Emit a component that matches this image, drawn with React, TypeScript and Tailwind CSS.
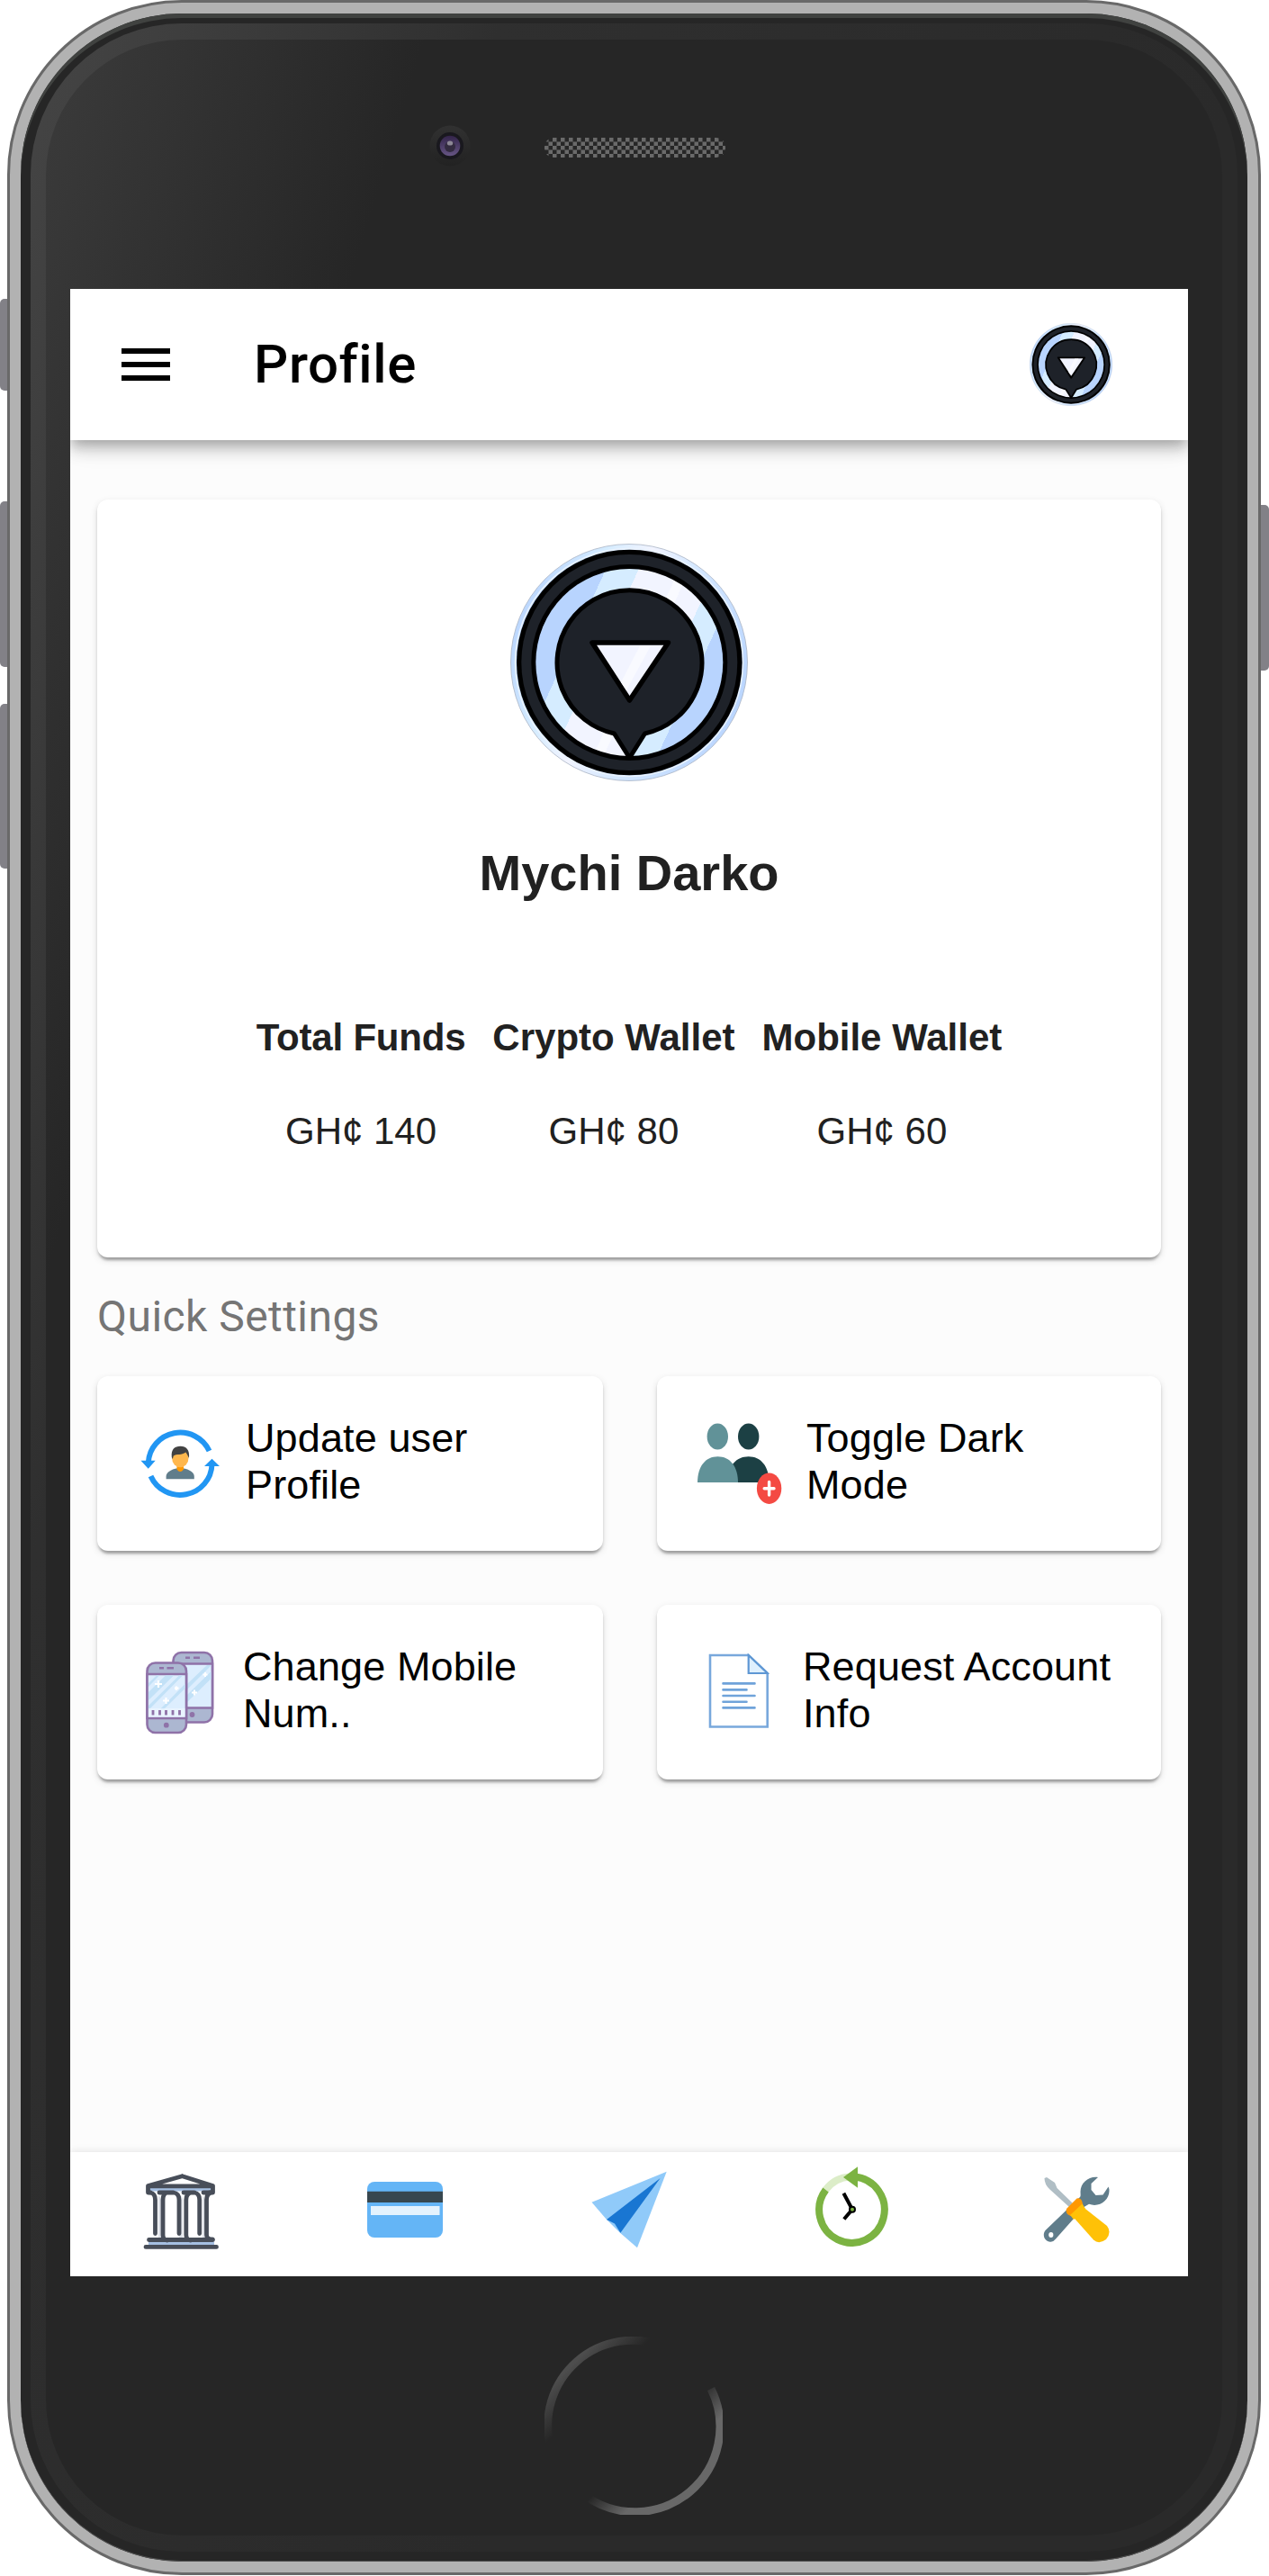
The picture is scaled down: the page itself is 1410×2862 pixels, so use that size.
import React from "react";

type IconProps = { className?: string };

function CoinLogo({ className }: IconProps) {
  return (
    <svg viewBox="0 0 264 264" className={className}>
      <defs>
        <linearGradient id="shine" gradientUnits="userSpaceOnUse" x1="0" y1="0" x2="240" y2="111">
          <stop offset="0.41" stopColor="#b8d4fe" />
          <stop offset="0.41" stopColor="#d5ecff" />
          <stop offset="0.535" stopColor="#d5ecff" />
          <stop offset="0.535" stopColor="#f2f4ff" />
          <stop offset="0.69" stopColor="#f2f4ff" />
          <stop offset="0.69" stopColor="#f9faff" />
          <stop offset="0.73" stopColor="#f9faff" />
          <stop offset="0.73" stopColor="#f2f4ff" />
          <stop offset="0.83" stopColor="#f2f4ff" />
          <stop offset="0.83" stopColor="#d5ecff" />
          <stop offset="0.935" stopColor="#d5ecff" />
          <stop offset="0.935" stopColor="#b8d4fe" />
        </linearGradient>
        <linearGradient id="rim" x1="0" y1="0.3" x2="1" y2="0.7">
          <stop offset="0" stopColor="#b8d4fe" />
          <stop offset="0.25" stopColor="#d5ecff" />
          <stop offset="0.42" stopColor="#f2f4ff" />
          <stop offset="0.6" stopColor="#d5e8ff" />
          <stop offset="1" stopColor="#b8d4fe" />
        </linearGradient>
      </defs>
      <circle cx="132" cy="132" r="131.500" fill="url(#rim)" stroke="#a9b4c4" strokeWidth="0.800" />
      <circle cx="132" cy="132" r="126.500" fill="none" stroke="#eaf3ff" strokeWidth="1.500" />
      <circle cx="132.300" cy="132" r="125.300" fill="#000" />
      <circle cx="132.300" cy="132" r="120" fill="#1e2229" />
      <circle cx="132.300" cy="132" r="109" fill="#000" />
      <circle cx="132.300" cy="132" r="104" fill="url(#shine)" />
      <path
        d="M115.500 211A80.500 80.500 0 1 1 149.500 211L132.500 238Z"
        fill="#1e2229"
        stroke="#000"
        strokeWidth="5"
        strokeLinejoin="round"
      />
      <path d="M91 110H175.500L132.500 174Z" fill="#f2f4ff" stroke="#000" strokeWidth="5.500" strokeLinejoin="round" />
      <path d="M144 113.500H156L129 163L123 154Z" fill="#f9faff" />
    </svg>
  );
}

function UpdateUserIcon({ className }: IconProps) {
  return (
    <svg viewBox="0 0 88 76" className={className}>
      <g fill="none" stroke="#2196f3" strokeWidth="6">
        <path d="M8.800 37A35.500 35 0 0 1 76.500 24" />
        <path d="M79.500 39A35.500 35 0 0 1 11.500 52" />
      </g>
      <path d="M.5 34.700H16.700L8.700 43.700ZM71 41H88L79.500 32.700Z" fill="#2196f3" />
      <path d="M28.600 55.300V52C28.600 47 37 43 44.200 43S59.800 47 59.800 52V55.300Z" fill="#607d8b" />
      <path d="M40.500 39H48V44.500Q44.200 49.500 40.500 44.500Z" fill="#ff9800" />
      <ellipse cx="44.300" cy="32" rx="9.200" ry="10.300" fill="#ffb74d" />
      <path d="M34.800 31C34 22 38 18.800 44.500 18.800C51 18.800 55 23 54 32L52.500 29L50.500 25.500C46 29 40 27 36.800 29.500L35.800 33Z" fill="#424242" />
    </svg>
  );
}

function UsersPlusIcon({ className }: IconProps) {
  return (
    <svg viewBox="0 0 94 90" className={className}>
      <ellipse cx="56.700" cy="15" rx="11.700" ry="14.500" fill="#1c4044" />
      <path d="M33 66C33 48 43 37.200 56.700 37.200S79.500 48 79.500 66Z" fill="#1c4044" />
      <ellipse cx="22.300" cy="15" rx="11.700" ry="14.500" fill="#619298" />
      <path d="M0 66C0 48 9 37.200 22.500 37.200S45 48 45 66Z" fill="#619298" />
      <ellipse cx="79.600" cy="72.700" rx="13.700" ry="17.200" fill="#f44a43" />
      <path d="M79.600 65.500V80M74.200 72.700H85" stroke="#fff" strokeWidth="3.400" strokeLinecap="round" />
    </svg>
  );
}

function PhonesIcon({ className }: IconProps) {
  return (
    <svg viewBox="0 0 76 93" className={className}>
      <g stroke="#8f72a8" strokeWidth="2.600">
        <rect x="30.500" y="2" width="43.500" height="77.500" rx="9" fill="#acb7d1" />
        <path d="M30.500 14.500H74V63.500H30.500Z" fill="#ddeefe" />
      </g>
      <path d="M46 49L72.500 23V31L46 57ZM46 37L68 16H73L46 43Z" fill="#c2e1f7" />
      <path d="M44 7.800H49M53 7.800H60" stroke="#8f72a8" strokeWidth="2.600" />
      <circle cx="51.500" cy="71" r="2.900" fill="#8f72a8" />
      <path d="M54 43.500V49.500M51 46.500H57M66 24V29M63.500 26.500H68.500" stroke="#fff" strokeWidth="2" />
      <g stroke="#8f72a8" strokeWidth="2.600">
        <rect x="1.500" y="13.500" width="43.500" height="77.500" rx="9" fill="#acb7d1" />
        <path d="M1.500 26H45V75H1.500Z" fill="#ddeefe" />
      </g>
      <path d="M3 46L22 27.500H31L3 55ZM3 61L37 27.500H41L3 66ZM16 65L43.500 37V42L20 65ZM3 36L12 27.500H15L3 40Z" fill="#c2e1f7" />
      <path d="M3 64H43.500V73.500H3Z" fill="#eef6ff" opacity="0.700" />
      <path d="M15 19.300H20M23.500 19.300H31" stroke="#8f72a8" strokeWidth="2.600" />
      <path d="M8 66V71.500M15.500 66V71.500M22.500 66V71.500M30 66V71.500M37.500 66V71.500" stroke="#8f72a8" strokeWidth="2.800" />
      <path d="M14 33V41M10 37H18M22.500 52V59M19 55.500H26M34 39.500V44M32 41.700H36.500" stroke="#fff" strokeWidth="2.200" />
      <circle cx="22.800" cy="82.700" r="2.900" fill="#8f72a8" />
    </svg>
  );
}

function DocumentIcon({ className }: IconProps) {
  return (
    <svg viewBox="0 0 70 84" className={className}>
      <path d="M4 2H46.700L67.700 22V81.500H4Z" fill="#fff" stroke="#78a8dc" strokeWidth="2.600" />
      <path d="M46.700 2V22H67.700Z" fill="#dff0fe" stroke="#5e97d4" strokeWidth="2.200" />
      <path
        d="M18.500 33.400H53.500M18.500 40.400H44.500M18.500 47H53.500M18.500 53.800H44.500M18.500 60.400H53.500"
        stroke="#6fa3da"
        strokeWidth="2.600"
        strokeLinecap="round"
      />
    </svg>
  );
}

function BankIcon({ className }: IconProps) {
  return (
    <svg viewBox="0 0 85 85" className={className}>
      <path d="M6.500 15.500H78.500V19.500H6.500ZM6 75.500H79V79.500H6Z" fill="#a5bfe2" />
      <path d="M39 25Q43 23 44 28V72H40ZM17 25Q20 25 20 30V72H17ZM66 25Q68 25 68.500 30V72H66Z" fill="#dfe2e8" />
      <g fill="none" stroke="#484e59" strokeWidth="4.800" strokeLinecap="round" strokeLinejoin="round">
        <path d="M43.500 2.800L5.500 13.500V21H8M43.500 2.800L77.500 13.500V21H74M5.500 13.800H77.500" />
        <path d="M8 21Q13.500 22 13.500 29V66.500" />
        <path d="M18 21H34Q40 22 40 29V66.500M31 21H27Q22 22 22 29V68Q22 74 27 74" />
        <path d="M45 21H57Q62.700 22 62.700 29V66.500M57 21H54Q47.800 22 47.800 29V68Q47.800 74 53 74" />
        <path d="M67 21H75Q70.500 23 70.500 29V68Q70.500 73 77 73" />
        <path d="M6.500 73.500H77.500M3 81.400H81.500" />
      </g>
    </svg>
  );
}

function CreditCardIcon({ className }: IconProps) {
  return (
    <svg viewBox="0 0 84 62" className={className}>
      <rect width="84" height="62" rx="8" fill="#64b5f6" />
      <path d="M0 10.700H84V23H0Z" fill="#37474f" />
      <path d="M4 27H80.500V37H4Z" fill="#e3f2fd" />
    </svg>
  );
}

function PaperPlaneIcon({ className }: IconProps) {
  return (
    <svg viewBox="0 0 86 86" className={className}>
      <path d="M1.500 34.700L84.700 .7L52 85.300L33 68.700L18 54Z" fill="#90caf9" />
      <path d="M18 54L77.600 8L33.400 68.700L27 58.500Z" fill="#1976d2" />
    </svg>
  );
}

function HistoryIcon({ className }: IconProps) {
  return (
    <svg viewBox="0 0 84 90" className={className}>
      <path d="M12 27.500A36.300 36.700 0 0 1 40 12.500" fill="none" stroke="#dcedc8" strokeWidth="8" />
      <path d="M44 12.500A36.300 36.700 0 1 1 12.500 27" fill="none" stroke="#7cb342" strokeWidth="8" />
      <path d="M32 13L48 1.300V24.700Z" fill="#7cb342" />
      <path d="M32.400 30.700L42 48.700L32.800 59.500" fill="none" stroke="#000" strokeWidth="4" />
      <circle cx="42" cy="48.700" r="4" fill="#000" />
      <circle cx="42" cy="48.700" r="2" fill="#7cb342" />
    </svg>
  );
}

function ToolsIcon({ className }: IconProps) {
  return (
    <svg viewBox="0 0 75 75" className={className}>
      <path
        d="M61 2C51 .5 41.500 8 41.500 18C41.500 21 42 23 41 24L2.500 61C-2 67 3 75 9.500 73.500Q12 73 14 70.500L45.500 35L51 31.800C62 36 73.500 28 73.500 17Q73.500 14.500 72.500 12.500L66.500 21.500L58.500 22L53.500 16V9Z"
        fill="#607d8b"
      />
      <ellipse cx="8.800" cy="66" rx="2.600" ry="3" fill="#fff" />
      <path d="M1.500 3L4 2L13 8L15.500 14L33 31L29 35L7.500 15.500Q1.500 10 1.500 3Z" fill="#b0bec5" />
      <path d="M30 42.300L45 35.500L71 56Q76.500 63 70 71Q62 77 56 71.500Z" fill="#ffc107" />
      <path d="M37.500 25.500Q41.500 24.500 43 28L45 35.500L30.500 45Q24 42 26 37Z" fill="#ff9800" />
      <path d="M30 44L43.500 31.500L47 37L34 49Z" fill="#ffc107" />
    </svg>
  );
}

const funds = [
  { label: "Total Funds", value: "GH¢ 140", tracking: "tracking-[-0.2px]" },
  { label: "Crypto Wallet", value: "GH¢ 80", tracking: "tracking-normal" },
  { label: "Mobile Wallet", value: "GH¢ 60", tracking: "tracking-normal" },
];

const settings = [
  { label: "Update user Profile", Icon: UpdateUserIcon, icon: "ml-[48px] mt-[59px] w-[88px] h-[76px]", text: "ml-[29px]" },
  { label: "Toggle Dark Mode", Icon: UsersPlusIcon, icon: "ml-[45px] mt-[52px] w-[94px] h-[90px]", text: "ml-[27px]" },
  { label: "Change Mobile Num..", Icon: PhonesIcon, icon: "ml-[54px] mt-[51px] w-[76px] h-[93px]", text: "ml-[32px]" },
  { label: "Request Account Info", Icon: DocumentIcon, icon: "ml-[55px] mt-[54px] w-[70px] h-[84px]", text: "ml-[37px]" },
];

const tabs = [
  { name: "Bank", Icon: BankIcon, size: "w-[85px] h-[85px] mt-[24px] -ml-[1px]" },
  { name: "Cards", Icon: CreditCardIcon, size: "w-[84px] h-[62px] mt-[33px] -ml-[2px]" },
  { name: "Send", Icon: PaperPlaneIcon, size: "w-[86px] h-[86px] mt-[21px]" },
  { name: "History", Icon: HistoryIcon, size: "w-[84px] h-[90px] mt-[15px]" },
  { name: "Settings", Icon: ToolsIcon, size: "w-[75px] h-[75px] mt-[26px] ml-[2px]" },
];

function TopBar() {
  return (
    <header className="relative z-10 flex h-[168px] items-center bg-white pl-[57px] pr-[84px] shadow-[0_6px_12px_-3px_rgba(0,0,0,0.2),0_12px_15px_0_rgba(0,0,0,0.14),0_3px_30px_0_rgba(0,0,0,0.12)]">
      <button aria-label="Menu" className="flex w-[54px] flex-col gap-[9px]">
        <span className="h-[6px] bg-black" />
        <span className="h-[6px] bg-black" />
        <span className="h-[6px] bg-black" />
      </button>
      <h1 className="ml-[93px] font-[Roboto,sans-serif] text-[60px] leading-[72px] font-medium tracking-[0.6px] text-black">
        Profile
      </h1>
      <CoinLogo className="ml-auto size-[92px]" />
    </header>
  );
}

function ProfileCard() {
  return (
    <section className="flex h-[842px] flex-col items-center rounded-[12px] bg-white pt-[49px] text-[#212121] shadow-[0_6px_3px_-3px_rgba(0,0,0,0.2),0_3px_3px_0_rgba(0,0,0,0.14),0_3px_9px_0_rgba(0,0,0,0.12)]">
      <CoinLogo className="size-[264px]" />
      <h2 className="mt-[70px] text-[56px] leading-[64px] font-bold">Mychi Darko</h2>
      <div className="mt-[127px] flex gap-[30px] text-[42px] leading-[48px]">
        {funds.map((f) => (
          <div key={f.label} className="flex flex-col items-center gap-[56px] whitespace-nowrap">
            <span className={`font-bold ${f.tracking}`}>{f.label}</span>
            <span>{f.value}</span>
          </div>
        ))}
      </div>
    </section>
  );
}

function QuickSettings() {
  return (
    <section>
      <h3 className="mt-[36px] font-[Roboto,sans-serif] text-[48px] leading-[60px] tracking-[0.45px] text-[#757575]">
        Quick Settings
      </h3>
      <div className="mt-[36px] grid grid-cols-[562px_560px] gap-[60px]">
        {settings.map(({ label, Icon, icon, text }) => (
          <div
            key={label}
            className="flex h-[194px] items-start rounded-[12px] bg-white shadow-[0_6px_3px_-3px_rgba(0,0,0,0.2),0_3px_3px_0_rgba(0,0,0,0.14),0_3px_9px_0_rgba(0,0,0,0.12)]"
          >
            <div className={icon}>
              <Icon className="size-full" />
            </div>
            <p className={`${text} mt-[43px] w-[354px] text-[45px] leading-[52px] tracking-[0.12px] text-black`}>{label}</p>
          </div>
        ))}
      </div>
    </section>
  );
}

function BottomNav() {
  return (
    <nav className="mt-auto grid h-[138px] grid-cols-5 bg-white shadow-[0_0_9px_rgba(0,0,0,0.12)]">
      {tabs.map(({ name, Icon, size }) => (
        <button key={name} aria-label={name} className="flex items-start justify-center">
          <Icon className={size} />
        </button>
      ))}
    </nav>
  );
}

function Camera() {
  return (
    <svg viewBox="0 0 46 46" className="size-[46px]">
      <defs>
        <linearGradient id="cam-ring" x1="0" y1="0" x2="0" y2="1">
          <stop offset="0" stopColor="#313131" />
          <stop offset="1" stopColor="#222222" />
        </linearGradient>
        <linearGradient id="cam-lens" x1="0" y1="0" x2="0" y2="1">
          <stop offset="0" stopColor="#33244a" />
          <stop offset="1" stopColor="#665584" />
        </linearGradient>
      </defs>
      <circle cx="23" cy="23" r="22.500" fill="url(#cam-ring)" />
      <circle cx="23" cy="23" r="15" fill="#19181e" />
      <circle cx="23" cy="23" r="11.300" fill="url(#cam-lens)" />
      <circle cx="23" cy="24" r="6" fill="#332b40" />
      <ellipse cx="23" cy="20" rx="3.200" ry="2.600" fill="#8d8896" />
    </svg>
  );
}

function Speaker() {
  return (
    <svg viewBox="0 0 201 22" className="ml-[82px] h-[22px] w-[201px]">
      <defs>
        <pattern id="mesh" width="9" height="9" patternUnits="userSpaceOnUse">
          <rect width="9" height="9" fill="#262626" />
          <path d="M0 0H4.500V4.500H0ZM4.500 4.500H9V9H4.500Z" fill="#6a6a6a" />
        </pattern>
      </defs>
      <rect width="201" height="22" rx="10" fill="url(#mesh)" />
    </svg>
  );
}

function HomeButton() {
  return (
    <svg viewBox="0 0 198 198" className="mt-[67px] ml-[554px] size-[198px]">
      <defs>
        <linearGradient id="home-a" gradientUnits="userSpaceOnUse" x1="31" y1="31" x2="60" y2="60">
          <stop offset="0" stopColor="#4d4d4d" />
          <stop offset="1" stopColor="#262626" />
        </linearGradient>
        <linearGradient id="home-b" gradientUnits="userSpaceOnUse" x1="115" y1="115" x2="143" y2="143">
          <stop offset="0" stopColor="#262626" />
          <stop offset="1" stopColor="#686868" />
        </linearGradient>
      </defs>
      <path d="M5.500 117A94.500 94.500 0 0 1 128 9" fill="none" stroke="url(#home-a)" strokeWidth="9" />
      <path d="M185 58A94.500 94.500 0 0 1 44 176" fill="none" stroke="url(#home-b)" strokeWidth="9" />
    </svg>
  );
}

export default function App() {
  return (
    <div className="relative h-[2862px] w-[1410px] overflow-hidden bg-white pl-[8px] font-['Liberation_Sans',Arial,sans-serif]">
      <span className="absolute top-[332px] left-0 h-[102px] w-[14px] rounded-l-[5px] bg-[#828187]" />
      <span className="absolute top-[557px] left-0 h-[184px] w-[14px] rounded-l-[5px] bg-[#828187]" />
      <span className="absolute top-[782px] left-0 h-[183px] w-[14px] rounded-l-[5px] bg-[#828187]" />
      <span className="absolute top-[561px] right-0 h-[184px] w-[14px] rounded-r-[5px] bg-[#828187]" />

      <div className="relative h-[2861px] w-[1393px] rounded-[194px] border-[3px] border-[#696969] bg-[#696969]">
        <div className="h-full rounded-[191px] border-[12px] border-[#b2b2b2] bg-[#b2b2b2]">
          <div className="h-full rounded-[179px] bg-[#262626] p-[11px] shadow-[inset_0_5px_0_#404240,inset_0_-1px_0_#505050]">
            <div className="h-full rounded-[168px] bg-[linear-gradient(107deg,#454545_0px,#2f2f2f_500px,#2a2a2a_1300px)] px-[17px] py-[18px]">
              <div className="h-full rounded-[151px] bg-[linear-gradient(107deg,#3b3b3b_0px,#262626_403px)] pl-[27px]">
                <div className="flex h-[277px] pt-[95px] pl-[399px]">
                  <Camera />
                  <div className="pt-[14px]">
                    <Speaker />
                  </div>
                </div>
                <main className="flex h-[2208px] w-[1242px] flex-col overflow-hidden bg-[#fcfcfc]">
                  <TopBar />
                  <div className="px-[30px] pt-[66px]">
                    <ProfileCard />
                    <QuickSettings />
                  </div>
                  <BottomNav />
                </main>
                <div className="-ml-[27px]">
                  <HomeButton />
                </div>
              </div>
            </div>
          </div>
        </div>
      </div>
    </div>
  );
}
